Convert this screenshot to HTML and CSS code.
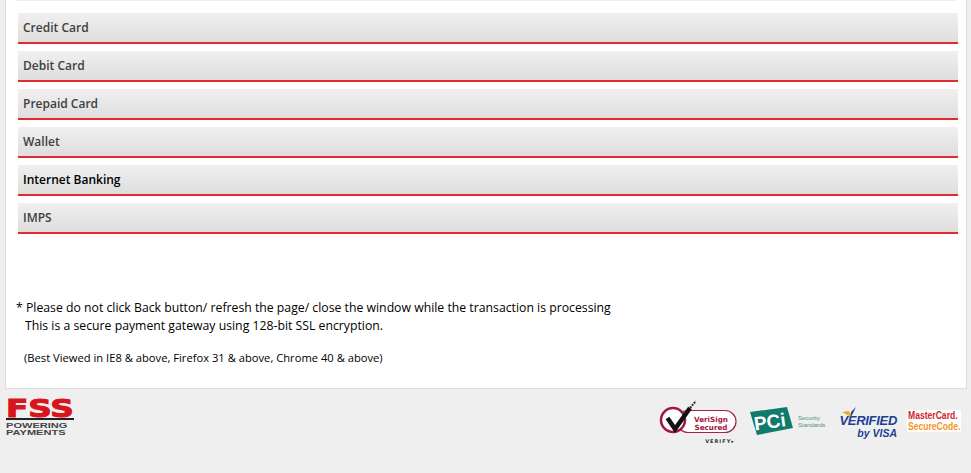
FILE: index.html
```html
<!DOCTYPE html>
<html lang="en">
<head>
    <meta charset="UTF-8">
    <title>Payment Options</title>
    <link rel="stylesheet" href="styles.css">
</head>
<body>
    <div class="panel">
        <div class="top-strip"></div>

        <!-- Payment methods -->
        <div class="methods">
            <div class="method">Credit Card</div>
            <div class="method">Debit Card</div>
            <div class="method">Prepaid Card</div>
            <div class="method">Wallet</div>
            <div class="method method-active">Internet Banking</div>
            <div class="method">IMPS</div>
        </div>

        <div class="notes">
            <p class="note-line">* Please do not click Back button/ refresh the page/ close the window while the transaction is processing</p>
            <p class="note-line note-indent">This is a secure payment gateway using 128-bit SSL encryption.</p>
            <p class="note-small">(Best Viewed in IE8 &amp; above, Firefox 31 &amp; above, Chrome 40 &amp; above)</p>
        </div>
    </div>

    <!-- Footer logos -->
    <div class="footer">
        <div class="fss-logo">
            <div class="fss-name"><span class="fss-letters">FSS</span></div>
            <div class="fss-tag">
                <div class="fss-tag-line">POWERING</div>
                <div class="fss-tag-line">PAYMENTS</div>
            </div>
        </div>

        <div class="badges">
            <svg class="verisign" width="85" height="48" viewBox="0 0 85 48">
                <rect x="22" y="12.500" width="59" height="22" rx="11" fill="#fff" stroke="#a3244a" stroke-width="1.200"/>
                <circle cx="18" cy="22" r="12" fill="#fff" stroke="#a3173f" stroke-width="2.500"/>
                <path d="M12.500 20L20 31L35 10" fill="none" stroke="#111" stroke-width="4.500"/>
                <path d="M35 10L41 3" stroke="#333" stroke-width="2" stroke-dasharray="2 1"/>
                <text x="56" y="23.500" class="vs-text">VeriSign</text>
                <text x="56" y="31.500" class="vs-text">Secured</text>
                <text x="65" y="45" class="vs-verify">VERIFY▸</text>
            </svg>

            <svg class="pci" width="84" height="36" viewBox="0 0 84 36">
                <path d="M4 10L41 5L47 26L11 33Z" fill="#0f7b6c"/>
                <text x="9" y="28.500" class="pci-text" transform="rotate(-8 9 28.500)">PCi</text>
                <text x="52" y="18" class="pci-small">Security</text>
                <text x="52" y="25" class="pci-small">Standards</text>
            </svg>

            <div class="visa">
                <svg class="visa-tick" width="22" height="14" viewBox="0 0 22 14">
                    <path d="M0 5L7 4L9 10Z" fill="#f2a71b"/>
                    <path d="M8 12L14 0L9 5Z" fill="#1c3f94"/>
                </svg>
                <div class="visa-top">VERIFIED</div>
                <div class="visa-bottom">by VISA</div>
            </div>

            <div class="mc">
                <div class="mc-line mc-top">MasterCard.</div>
                <div class="mc-line mc-bottom">SecureCode.</div>
            </div>
        </div>
    </div>
</body>
</html>
```

FILE: styles.css
```css
html, body {
    height: 100%;
}

body {
    background-color: #efefef;
    color: #000;
    font-family: "Open Sans", "Noto Sans", sans-serif;
    margin: 0;
    overflow: hidden;
}

.panel {
    height: 389px;
    margin: 0 4px 0 5px;
    background-color: #fff;
    border: 1px solid #ddd;
    border-top: none;
    box-sizing: border-box;
    padding: 0 8px 0 12px;
}

.top-strip {
    height: 1px;
    margin: 0 2px 0 -2px;
    background-color: #efefef;
}

/* Payment methods */
.methods {
    display: flex;
    flex-direction: column;
    gap: 7px;
    margin-top: 12px;
}

.method {
    height: 29px;
    line-height: 29px;
    padding-left: 5px;
    background: linear-gradient(#f0f0f0, #dedede);
    border-bottom: 2px solid #e12a31;
    color: #404040;
    font-size: 12px;
    font-weight: 600;
}

.method-active {
    color: #000;
}

.notes {
    margin: 65px 0 0 -2px;
    font-size: 12.250px;
}

.note-line {
    margin: 0;
    height: 18px;
    line-height: 18px;
}

.note-indent {
    padding-left: 9px;
}

.note-small {
    margin: 16px 0 0 8px;
    font-size: 11.200px;
    line-height: 14px;
}

/* Footer logos */
.footer {
    display: flex;
    justify-content: space-between;
    padding: 9px 10px 0 6px;
}

.fss-logo {
    width: 68px;
}

.fss-name {
    height: 20px;
    border-bottom: 2px solid #222;
    line-height: 22px;
}

.fss-letters {
    display: inline-block;
    color: #d8141c;
    font-family: "DejaVu Sans", sans-serif;
    font-size: 24px;
    font-weight: 700;
    -webkit-text-stroke: 1px #d8141c;
    transform: scaleX(1.36);
    transform-origin: left center;
}

.fss-tag {
    margin-top: 2px;
    color: #444;
    font-family: "Liberation Sans", sans-serif;
    font-size: 7px;
    font-weight: 700;
    line-height: 7px;
}

.fss-tag-line {
    transform: scaleX(1.58);
    transform-origin: left center;
}

.badges {
    display: flex;
    align-items: flex-start;
}

.verisign {
    margin-right: 6px;
}

.vs-text {
    fill: #a3173f;
    font-family: "DejaVu Sans", sans-serif;
    font-size: 7.200px;
    font-weight: 700;
    text-anchor: middle;
}

.vs-verify {
    fill: #333;
    font-family: "DejaVu Sans", sans-serif;
    font-size: 5px;
    font-weight: 700;
    letter-spacing: 1px;
    text-anchor: middle;
}

.pci {
    margin-top: 4px;
}

.pci-text {
    fill: #fff;
    font-family: "Liberation Sans", sans-serif;
    font-size: 19px;
    font-weight: 700;
}

.pci-small {
    fill: #4f8f84;
    font-family: "Liberation Sans", sans-serif;
    font-size: 6px;
}

.visa {
    position: relative;
    width: 58px;
    margin: 16px 10px 0 9px;
    color: #1c3f94;
    font-family: "Liberation Sans", sans-serif;
    font-style: italic;
    font-weight: 700;
    text-align: right;
}

.visa-tick {
    position: absolute;
    left: 3px;
    top: -7px;
}

.visa-top {
    font-size: 13px;
    line-height: 13px;
    letter-spacing: -0.300px;
}

.visa-bottom {
    font-size: 10.500px;
    line-height: 12px;
}

.mc {
    width: 54px;
    height: 22px;
    margin-top: 12px;
    box-sizing: border-box;
    padding-left: 1px;
    background-color: #fff;
    font-family: "Liberation Sans", sans-serif;
    font-size: 11px;
    font-weight: 700;
    line-height: 11px;
}

.mc-line {
    width: 66px;
    white-space: nowrap;
    transform: scaleX(0.78);
    transform-origin: left center;
}

.mc-top {
    color: #d01f2c;
}

.mc-bottom {
    color: #f7941d;
}
```
